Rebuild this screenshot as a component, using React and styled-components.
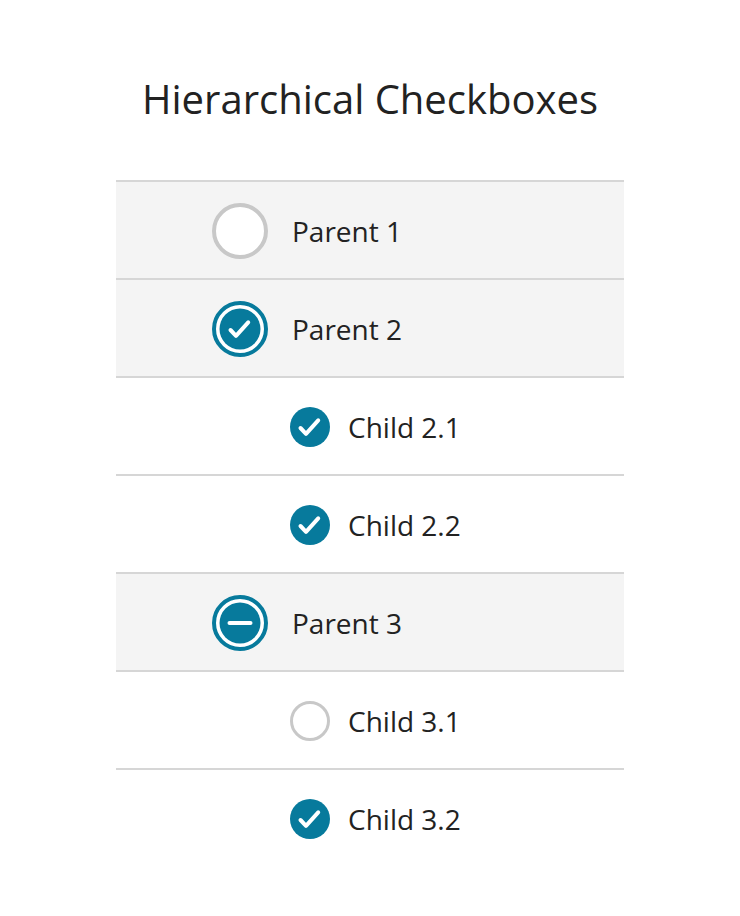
import React from "react";
import styled, { createGlobalStyle } from "styled-components";

const GlobalStyle = createGlobalStyle`
  html, body { margin: 0; padding: 0; background: #ffffff; }
  body { font-family: "Open Sans", "Liberation Sans", sans-serif; color: #222222; }
`;

const TEAL = "#077a9c";
const GRAY = "#c8c8c8";

const Page = styled.main`
  width: 508px;
  margin: 0 auto;
  padding-top: 75px;
`;

const Title = styled.h1`
  margin: 0 0 57px;
  font-size: 40px;
  line-height: 48px;
  font-weight: 400;
  text-align: center;
  color: #222222;
`;

const List = styled.ul`
  list-style: none;
  margin: 0;
  padding: 0;
`;

const Row = styled.li`
  box-sizing: border-box;
  display: flex;
  align-items: center;
  height: 98px;
  border-top: 2px solid #d6d6d6;
  padding-top: 2px;
  background: ${(p) => (p.$parent ? "#f4f4f4" : "#ffffff")};
  padding-left: ${(p) => (p.$parent ? "96px" : "174px")};
  gap: ${(p) => (p.$parent ? "24px" : "18px")};
`;

const Label = styled.span`
  font-size: 28px;
  line-height: 1;
  color: #222222;
`;

const Box = styled.svg`
  flex: none;
  display: block;
`;

function CheckIcon({ parent, state }) {
  const size = parent ? 56 : 40;
  const o = parent ? 8 : 0; // offset of inner 40px circle
  const mark =
    state === "checked" ? (
      <path
        d={`M${o + 10.5} ${o + 21}L${o + 16} ${o + 26.8}L${o + 28.2} ${o + 13.3}`}
        fill="none"
        stroke="#fff"
        strokeWidth="4"
        strokeLinecap="round"
        strokeLinejoin="round"
      />
    ) : state === "mixed" ? (
      <path
        d={`M${o + 9.5} ${o + 20}H${o + 30.5}`}
        stroke="#fff"
        strokeWidth="4"
        strokeLinecap="round"
      />
    ) : null;

  if (state === "unchecked") {
    const sw = parent ? 4 : 3;
    return (
      <Box width={size} height={size} viewBox={`0 0 ${size} ${size}`}>
        <circle cx={size / 2} cy={size / 2} r={size / 2 - sw / 2} fill="#fff" stroke={GRAY} strokeWidth={sw} />
      </Box>
    );
  }

  return (
    <Box width={size} height={size} viewBox={`0 0 ${size} ${size}`}>
      {parent && <circle cx="28" cy="28" r="26" fill="#fff" stroke={TEAL} strokeWidth="4" />}
      <circle cx={size / 2} cy={size / 2} r={parent ? 20.5 : 20} fill={TEAL} />
      {mark}
    </Box>
  );
}

const items = [
  { label: "Parent 1", parent: true, state: "unchecked" },
  { label: "Parent 2", parent: true, state: "checked" },
  { label: "Child 2.1", parent: false, state: "checked" },
  { label: "Child 2.2", parent: false, state: "checked" },
  { label: "Parent 3", parent: true, state: "mixed" },
  { label: "Child 3.1", parent: false, state: "unchecked" },
  { label: "Child 3.2", parent: false, state: "checked" },
];

export default function App() {
  return (
    <>
      <GlobalStyle />
      <Page>
        <Title>Hierarchical Checkboxes</Title>
        <List>
          {items.map((it) => (
            <Row key={it.label} $parent={it.parent}>
              <CheckIcon parent={it.parent} state={it.state} />
              <Label>{it.label}</Label>
            </Row>
          ))}
        </List>
      </Page>
    </>
  );
}
